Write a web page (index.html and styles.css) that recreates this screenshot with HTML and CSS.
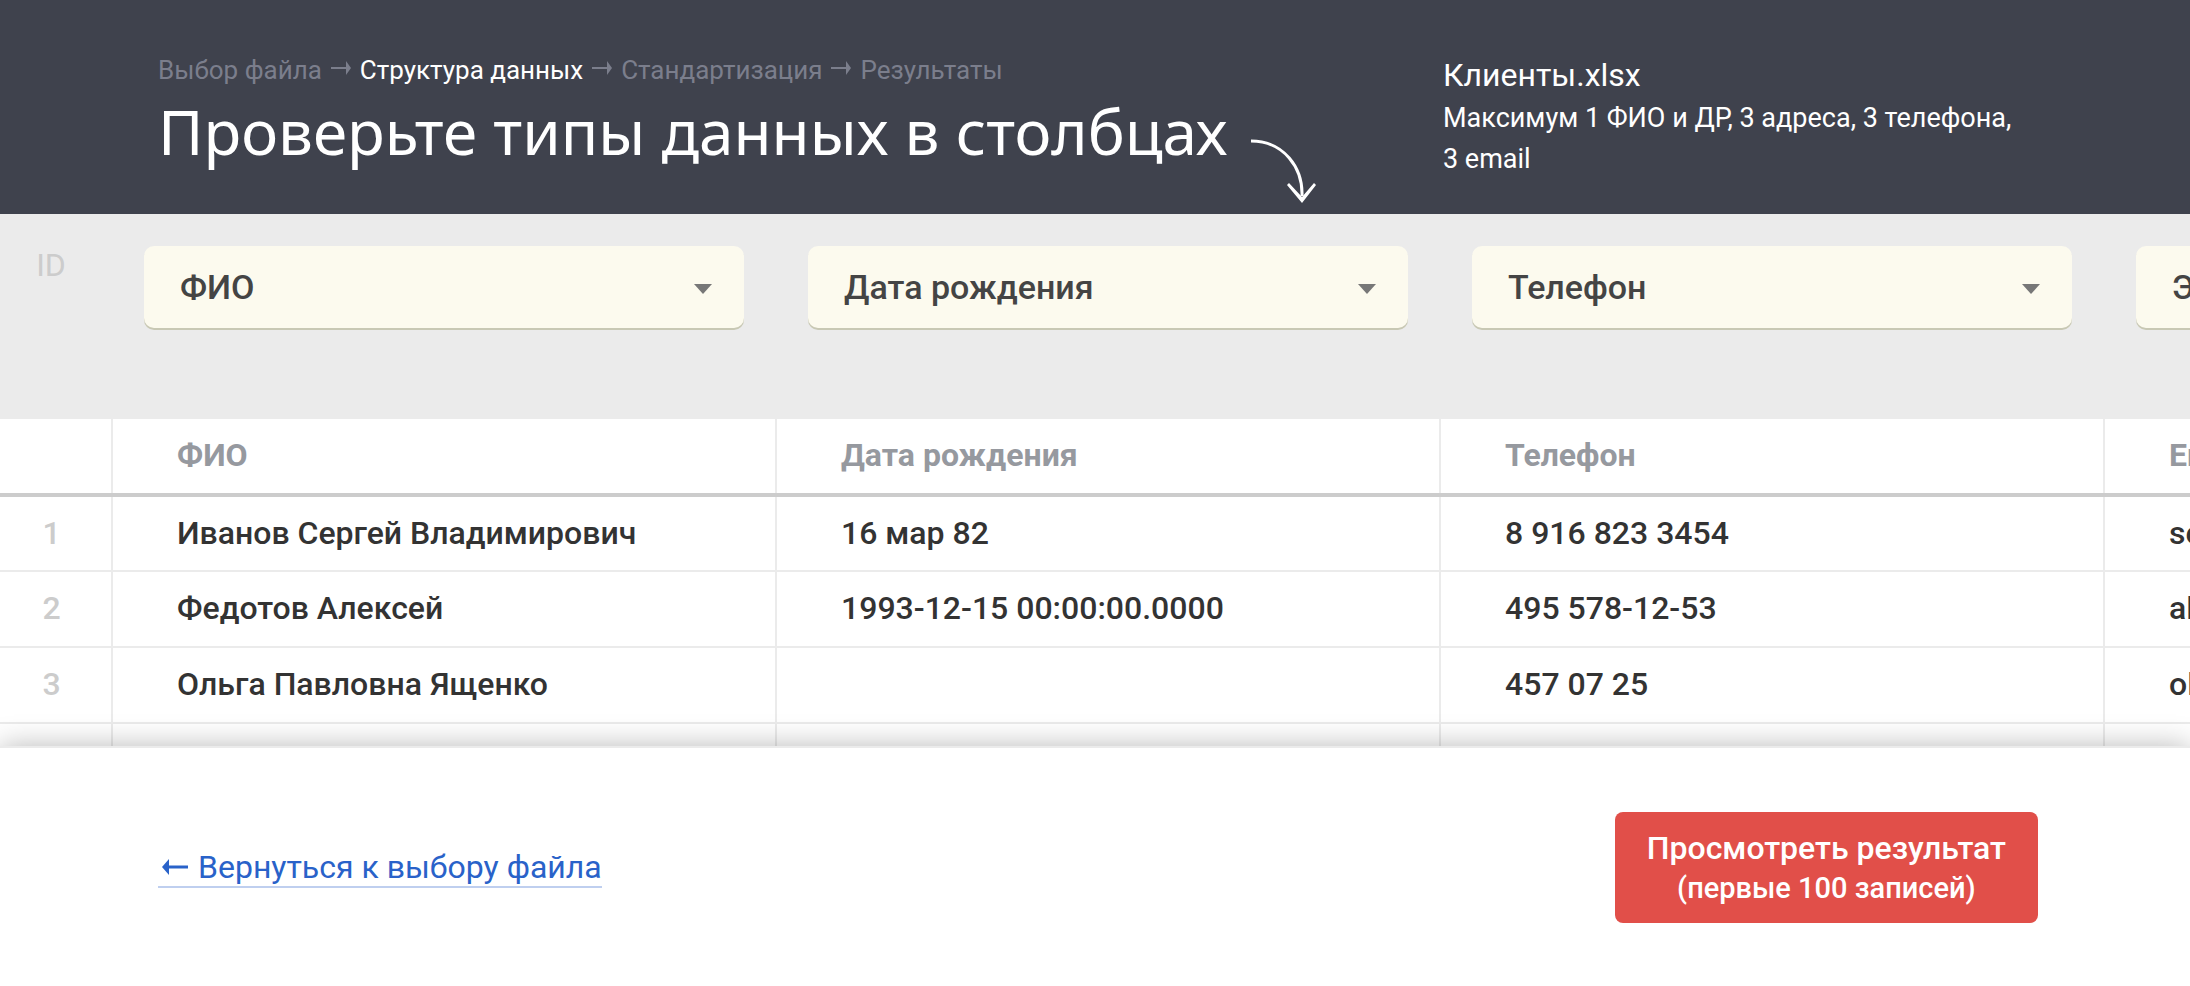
FILE: index.html
```html
<!DOCTYPE html>
<html lang="ru">
<head>
    <meta charset="UTF-8">
    <meta name="viewport" content="width=device-width, initial-scale=1.0">
    <title>Структура данных</title>
    <link rel="stylesheet" href="styles.css">
</head>
<body>

<header class="header">
    <div class="header-main">
        <nav class="steps">
            <span>Выбор файла</span>
            <svg class="step-arrow" viewBox="0 0 20 14"><path d="M0 7h15" stroke="currentColor" stroke-width="2"/><path d="M15 0l5 7-5 7z" fill="currentColor"/></svg>
            <span class="current">Структура данных</span>
            <svg class="step-arrow" viewBox="0 0 20 14"><path d="M0 7h15" stroke="currentColor" stroke-width="2"/><path d="M15 0l5 7-5 7z" fill="currentColor"/></svg>
            <span>Стандартизация</span>
            <svg class="step-arrow" viewBox="0 0 20 14"><path d="M0 7h15" stroke="currentColor" stroke-width="2"/><path d="M15 0l5 7-5 7z" fill="currentColor"/></svg>
            <span>Результаты</span>
        </nav>
        <div class="title-row">
            <h1>Проверьте типы данных в столбцах</h1>
            <svg class="title-arrow" viewBox="0 0 68 66"><path d="M1 3C34 3 53 30 52 58" fill="none" stroke="#fff" stroke-width="3"/><path d="M37 47l2-2 13 14 12-14 2 2-14 18z" fill="#fff"/></svg>
        </div>
    </div>
    <div class="file-info">
        <p class="file-name">Клиенты.xlsx</p>
        <p class="file-limits">Максимум 1 ФИО и ДР, 3 адреса, 3 телефона, 3&nbsp;email</p>
    </div>
</header>

<main class="content">
    <table class="data">
        <colgroup>
            <col class="col-id">
            <col class="col-data">
            <col class="col-data">
            <col class="col-data">
            <col class="col-data">
        </colgroup>
        <thead>
            <tr class="types">
                <th class="id">ID</th>
                <th>
                    <div class="select">
                        <select aria-label="Тип столбца 1">
                            <option>ФИО</option>
                        </select>
                    </div>
                </th>
                <th>
                    <div class="select">
                        <select aria-label="Тип столбца 2">
                            <option>Дата рождения</option>
                        </select>
                    </div>
                </th>
                <th>
                    <div class="select">
                        <select aria-label="Тип столбца 3">
                            <option>Телефон</option>
                        </select>
                    </div>
                </th>
                <th>
                    <div class="select">
                        <select aria-label="Тип столбца 4">
                            <option>Эл. почта</option>
                        </select>
                    </div>
                </th>
            </tr>
            <tr class="names">
                <th class="id"></th>
                <th>ФИО</th>
                <th>Дата рождения</th>
                <th>Телефон</th>
                <th>Email</th>
            </tr>
        </thead>
        <tbody>
            <tr>
                <td class="id">1</td>
                <td>Иванов Сергей Владимирович</td>
                <td>16 мар 82</td>
                <td>8 916 823 3454</td>
                <td>serg</td>
            </tr>
            <tr>
                <td class="id">2</td>
                <td>Федотов Алексей</td>
                <td>1993-12-15 00:00:00.0000</td>
                <td>495 578-12-53</td>
                <td>alex</td>
            </tr>
            <tr>
                <td class="id">3</td>
                <td>Ольга Павловна Ященко</td>
                <td></td>
                <td>457 07 25</td>
                <td>olga</td>
            </tr>
            <tr>
                <td class="id"></td>
                <td></td>
                <td></td>
                <td></td>
                <td></td>
            </tr>
        </tbody>
    </table>
</main>

<footer class="footer">
    <a href="#" class="back">
        <svg class="back-arrow" viewBox="0 0 26 16"><path d="M6 8h20" stroke="currentColor" stroke-width="3"/><path d="M7 0v16L0 8z" fill="currentColor"/></svg>
        <span>Вернуться к выбору файла</span>
    </a>
    <button type="button" class="submit">
        Просмотреть результат
        <small>(первые 100 записей)</small>
    </button>
</footer>

</body>
</html>
```
FILE: styles.css
```css
* {
    box-sizing: border-box;
}

body {
    margin: 0;
    height: 100vh;
    display: flex;
    flex-direction: column;
    overflow: hidden;
    background: #fff;
    color: #333;
    font-family: Roboto, "Liberation Sans", sans-serif;
    font-size: 32px;
}

/* header */
.header {
    display: flex;
    justify-content: space-between;
    min-height: 214px;
    padding: 52px 152px 0 158px;
    background: #3f424d;
    color: #fff;
}

.steps {
    display: flex;
    align-items: center;
    gap: 9px;
    font-size: 26px;
    line-height: 36px;
    color: #7b7e8c;
}

.steps .current {
    color: #fff;
}

.step-arrow {
    width: 20px;
    height: 14px;
    margin-bottom: 4px;
}

.title-row {
    display: flex;
    gap: 22px;
}

h1 {
    margin: 0;
    font-family: "Noto Sans", sans-serif;
    font-size: 62px;
    font-weight: 400;
    line-height: 86px;
}

.title-arrow {
    width: 68px;
    height: 66px;
    margin-top: 50px;
}

.file-info {
    width: 595px;
}

.file-info p {
    margin: 0;
}

.file-name {
    line-height: 46px;
}

.file-limits {
    font-size: 27px;
    line-height: 41px;
}

/* table */
.content {
    flex: 1;
    min-height: 0;
    overflow: hidden;
}

.data {
    width: 2768px;
    table-layout: fixed;
    border-collapse: collapse;
}

.col-id {
    width: 112px;
}

.col-data {
    width: 664px;
}

.data th,
.data td {
    height: 76px;
    padding: 0 64px 2px;
    border-right: 2px solid #ebebeb;
    border-bottom: 2px solid #ebebeb;
    font-weight: 500;
    text-align: left;
}

.data .id {
    padding: 0 8px 2px 0;
    color: #ccc;
    text-align: center;
}

.data .types th {
    height: 205px;
    padding: 32px 32px 0;
    background: #ebebeb;
    border: none;
    vertical-align: top;
}

.data .types .id {
    padding: 32px 10px 0 0;
    font-weight: 400;
}

.data .names th {
    border-bottom: 4px solid #ccc;
    color: #96999f;
    font-weight: 700;
}

.select {
    position: relative;
}

.select::after {
    content: "";
    position: absolute;
    right: 32px;
    top: 38px;
    border: 9px solid transparent;
    border-top: 10px solid #777;
    border-bottom: none;
    pointer-events: none;
}

.select select {
    display: block;
    width: 100%;
    height: 82px;
    padding: 0 64px 0 36px;
    appearance: none;
    background: #fcfaee;
    border: none;
    border-radius: 10px;
    box-shadow: 0 2px 0 #c8c8b4;
    color: #444;
    font-family: inherit;
    font-size: 34px;
    font-weight: 500;
}

/* footer */
.footer {
    position: relative;
    display: flex;
    justify-content: space-between;
    align-items: center;
    height: 240px;
    padding: 0 152px 0 158px;
    background: #fff;
    border-top: 2px solid #ebebeb;
    box-shadow: 0 0 28px rgba(0, 0, 0, 0.28);
}

.back {
    display: flex;
    align-items: center;
    gap: 10px;
    padding: 2px 0 0 4px;
    border-bottom: 2px solid #bfcfef;
    color: #2962c9;
    line-height: 38px;
    text-decoration: none;
}

.back-arrow {
    width: 26px;
    height: 16px;
}

.submit {
    padding: 16px 32px 15px;
    background: #e14f49;
    border: none;
    border-radius: 8px;
    color: #fff;
    cursor: pointer;
    font-family: inherit;
    font-size: 32px;
    font-weight: 500;
    line-height: 40px;
}

.submit small {
    display: block;
    font-size: 29px;
}
```
